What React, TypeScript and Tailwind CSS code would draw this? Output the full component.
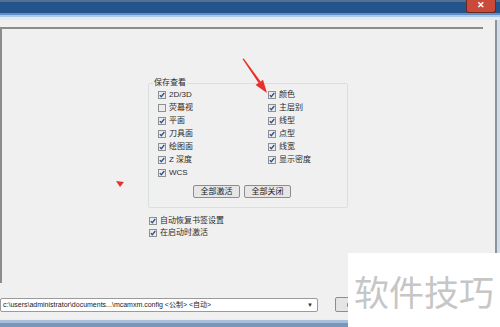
import React from "react";

const FONT = { fontFamily: '"Liberation Sans", "Noto Sans CJK SC", sans-serif' };

const leftItems = [
  { label: "2D/3D", checked: true },
  { label: "荧幕视", checked: false },
  { label: "平面", checked: true },
  { label: "刀具面", checked: true },
  { label: "绘图面", checked: true },
  { label: "Z 深度", checked: true },
  { label: "WCS", checked: true },
];

const rightItems = ["颜色", "主层别", "线型", "点型", "线宽", "显示密度"];

function Box({ checked }: { checked: boolean }) {
  return (
    <span className="flex h-[8px] w-[8px] shrink-0 items-center justify-center border border-[#8e8f8f] bg-[#ececec]">
      {checked && (
        <svg width="6" height="6" viewBox="0 0 6 6">
          <path d="M0.8 3.1 L2.3 4.7 L5.3 1" fill="none" stroke="#2e4f8c" strokeWidth="1.3" />
        </svg>
      )}
    </span>
  );
}

function Check({ label, checked = true }: { label: string; checked?: boolean }) {
  return (
    <div className="flex h-[13px] items-center gap-[3px] text-[8px] leading-none text-[#2b2b2b]">
      <Box checked={checked} />
      <span>{label}</span>
    </div>
  );
}

function Button({ label }: { label: string }) {
  return (
    <div className="flex h-[13px] w-[47px] items-center justify-center rounded-[2px] border border-[#8d8d8d] bg-[#e6e6e6] text-[8px] leading-none text-[#222]">
      {label}
    </div>
  );
}

export default function App() {
  return (
    <div className="relative flex h-[327px] w-[500px] flex-col overflow-hidden bg-[#f0f0f0]" style={FONT}>
      {/* title bar */}
      <div className="flex h-[17px] w-full shrink-0 flex-col bg-[#23548b]">
        <div className="h-[2px] bg-[#56708f]" />
        <div className="flex flex-1 justify-end pr-[4px]">
          <div className="-mt-[2px] flex h-[13px] w-[30px] items-center justify-center rounded-b-[3px] border border-t-0 border-[#6a2a20] bg-[#c94a38] text-[9px] font-bold leading-none text-white">
            ✕
          </div>
        </div>
        <div className="h-[3px] bg-[#5f8fc4]" />
        <div className="h-[2px] bg-[#a9c8e8]" />
      </div>
      <div className="h-[3px] shrink-0 bg-[#e4e9ee]" />

      <div className="flex flex-1">
        <div className="flex flex-1 flex-col">
          {/* inner panel */}
          <div className="mt-[7px] h-[256px] w-[483px] border-l-2 border-t-2 border-[#8c8c8c]">
            <div className="ml-[146px] mt-[49px] flex w-[200px] flex-col">
              <fieldset className="rounded-[2px] border border-[#d8dfe3] pb-[9px]">
                <legend className="ml-[4px] px-[1px] text-[8px] leading-[10px] text-[#2b2b2b]">保存查看</legend>
                <div className="grid grid-cols-[110px_1fr] pl-[9px]">
                  <div className="flex flex-col">
                    {leftItems.map((it) => (
                      <Check key={it.label} label={it.label} checked={it.checked} />
                    ))}
                  </div>
                  <div className="flex flex-col">
                    {rightItems.map((l) => (
                      <Check key={l} label={l} />
                    ))}
                  </div>
                </div>
                <div className="mt-[6px] flex gap-[4px] pl-[44px]">
                  <Button label="全部激活" />
                  <Button label="全部关闭" />
                </div>
              </fieldset>
              <div className="mt-[7px] flex flex-col pl-[1px]">
                <div className="-my-[0.5px]">
                  <Check label="自动恢复书签设置" />
                </div>
                <div className="-mt-[1px]">
                  <Check label="在启动时激活" />
                </div>
              </div>
            </div>
          </div>

          {/* bottom controls */}
          <div className="mt-[14px] flex items-center">
            <div className="flex h-[14px] w-[318px] items-center justify-between rounded-[2px] border border-[#9a9a9a] bg-white pl-[2px] pr-[4px] text-[7px] leading-none text-[#222]">
              <span>c:\users\administrator\documents...\mcamxm.config &lt;公制&gt; &lt;自动&gt;</span>
              <span className="text-[6px] text-[#333]">▼</span>
            </div>
            <div className="ml-[17px] flex h-[15px] w-[60px] items-center rounded-[2px] border border-[#8d8d8d] bg-[#e4e4e4] pl-[11px]">
              <span className="h-[6px] w-[6px] rounded-full bg-[#3aa655]" />
            </div>
          </div>
        </div>
        {/* right frame */}
        <div className="w-[5px] border-l-2 border-[#8795a3] bg-[#d3dde8]" />
      </div>

      <div className="mt-[7px] flex h-[8px] shrink-0 flex-col">
        <div className="h-[1px] bg-[#e8eef6]" />
        <div className="h-[3px] bg-[#a9c0db]" />
        <div className="flex-1 bg-[#7696bd]" />
      </div>

      {/* red annotation arrows */}
      <svg className="pointer-events-none absolute left-0 top-0" width="500" height="327">
        <polygon points="242.5,59 243.8,58.4 260.6,81.5 258.5,83" fill="#e7322c" />
        <polygon points="267,93 263,79.8 255.6,84.9" fill="#e7322c" />
        <polygon points="116,181 124,182 120,187" fill="#e7322c" />
      </svg>

      {/* watermark */}
      <div className="absolute bottom-0 left-[348px] flex h-[74px] w-[152px] items-center bg-white pl-[6px]">
        <span className="text-[35px] leading-none text-[#c6c6c6]" style={{ fontFamily: '"Noto Sans CJK SC", sans-serif' }}>
          软件技巧
        </span>
      </div>
    </div>
  );
}
